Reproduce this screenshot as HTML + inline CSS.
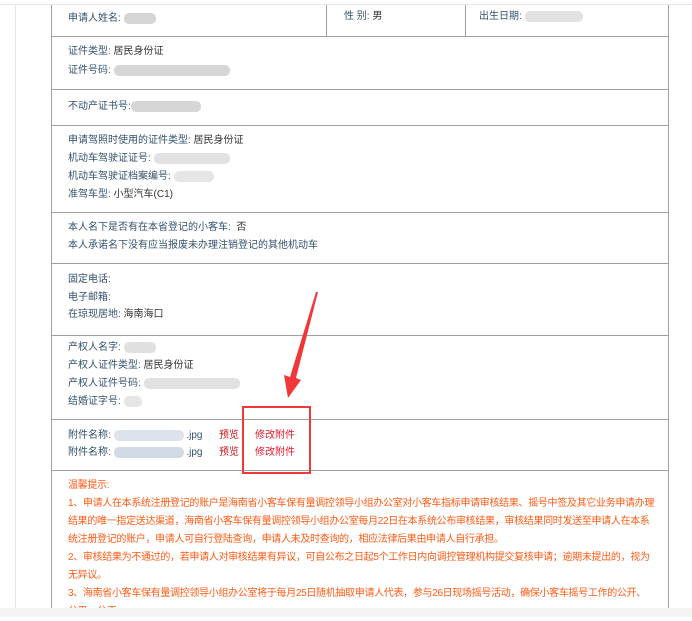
<!DOCTYPE html>
<html><head><meta charset="utf-8"><style>
body{margin:0;width:692px;height:617px;background:#fff;position:relative;overflow:hidden;font-family:"Liberation Sans","Noto Sans CJK SC",sans-serif;font-size:10px;color:#333}
.a{position:absolute;white-space:nowrap;line-height:18px}
.l{color:#34526e}
.h{position:absolute;left:51px;width:618px;height:1px;background:#a0a0a0}
.b{display:inline-block;height:11px;vertical-align:middle;background:#d6d6d6;border-radius:5px}
.t{position:absolute;left:68px;width:620px;color:#ff5a14;font-size:10px;line-height:18px;white-space:nowrap;letter-spacing:-0.32px}
</style></head><body>
<div style="position:absolute;left:0;top:4px;width:692px;height:1px;background:#e6e9ee"></div>
<div style="position:absolute;left:15px;top:5px;width:1px;height:603px;background:#dfe6ee"></div>
<div style="position:absolute;left:51px;top:5px;width:1px;height:603px;background:#a0a0a0"></div>
<div style="position:absolute;left:668px;top:5px;width:1px;height:603px;background:#a0a0a0"></div>
<div style="position:absolute;left:326px;top:5px;width:1px;height:31px;background:#a0a0a0"></div>
<div style="position:absolute;left:465px;top:5px;width:1px;height:31px;background:#a0a0a0"></div>
<div class="h" style="top:36px"></div><div class="h" style="top:89px"></div><div class="h" style="top:125px"></div><div class="h" style="top:212px"></div><div class="h" style="top:263px"></div><div class="h" style="top:335px"></div><div class="h" style="top:419px"></div><div class="h" style="top:470px"></div>

<div class="a" style="left:68px;top:10px"><span class="l">申请人姓名:</span> <span class="b" style="width:32px"></span></div>
<div class="a" style="left:344px;top:8px"><span class="l">性 别:</span> 男</div>
<div class="a" style="left:479px;top:8px"><span class="l">出生日期:</span> <span class="b" style="width:58px;background:#e2e2e2"></span></div>

<div class="a" style="left:68px;top:43px"><span class="l">证件类型:</span> 居民身份证</div>
<div class="a" style="left:68px;top:62px"><span class="l">证件号码:</span> <span class="b" style="width:116px"></span></div>
<div class="a" style="left:68px;top:98px"><span class="l">不动产证书号:</span><span class="b" style="width:70px"></span></div>

<div class="a" style="left:68px;top:132px"><span class="l">申请驾照时使用的证件类型:</span> 居民身份证</div>
<div class="a" style="left:68px;top:150px"><span class="l">机动车驾驶证证号:</span> <span class="b" style="width:76px;background:#e2e2e2"></span></div>
<div class="a" style="left:68px;top:168px"><span class="l">机动车驾驶证档案编号:</span> <span class="b" style="width:40px;background:#e6e6e6"></span></div>
<div class="a" style="left:68px;top:186px"><span class="l">准驾车型:</span> 小型汽车(C1)</div>

<div class="a" style="left:68px;top:219px"><span class="l">本人名下是否有在本省登记的小客车:</span>&nbsp; 否</div>
<div class="a" style="left:68px;top:237px"><span class="l">本人承诺名下没有应当报废未办理注销登记的其他机动车</span></div>

<div class="a" style="left:68px;top:271px"><span class="l">固定电话:</span></div>
<div class="a" style="left:68px;top:289px"><span class="l">电子邮箱:</span></div>
<div class="a" style="left:68px;top:306px"><span class="l">在琼现居地:</span> 海南海口</div>

<div class="a" style="left:68px;top:339px"><span class="l">产权人名字:</span> <span class="b" style="width:32px;background:#e0e0e0"></span></div>
<div class="a" style="left:68px;top:357px"><span class="l">产权人证件类型:</span> 居民身份证</div>
<div class="a" style="left:68px;top:375px"><span class="l">产权人证件号码:</span> <span class="b" style="width:96px;background:#e2e2e2"></span></div>
<div class="a" style="left:68px;top:393px"><span class="l">结婚证字号:</span> <span class="b" style="width:18px;background:#e6e6e6"></span></div>

<div class="a" style="left:68px;top:427px"><span class="l">附件名称:</span> <span class="b" style="width:70px;background:#dde3ea"></span> <span class="l">.jpg</span></div>
<div class="a" style="left:68px;top:444px"><span class="l">附件名称:</span> <span class="b" style="width:70px;background:#d2dbe5"></span> <span class="l">.jpg</span></div>
<div class="a" style="left:219px;top:427px;color:#d0101a">预览</div>
<div class="a" style="left:219px;top:444px;color:#d0101a">预览</div>
<div class="a" style="left:255px;top:427px;color:#e8182a">修改附件</div>
<div class="a" style="left:255px;top:444px;color:#e8182a">修改附件</div>
<div style="position:absolute;left:242px;top:406px;width:65px;height:64px;border:2.5px solid #f03838"></div>

<svg style="position:absolute;left:0;top:0" width="692" height="617"><polygon points="318,292 296,378 301,380 288,398 284,375 290,377 316,292" fill="#f03838"/></svg>

<div class="t" style="top:477px">温馨提示:<br>1、申请人在本系统注册登记的账户是海南省小客车保有量调控领导小组办公室对小客车指标申请审核结果、摇号中签及其它业务申请办理<br>结果的唯一指定送达渠道，海南省小客车保有量调控领导小组办公室每月22日在本系统公布审核结果，审核结果同时发送至申请人在本系<br>统注册登记的账户，申请人可自行登陆查询，申请人未及时查询的，相应法律后果由申请人自行承担。<br>2、审核结果为不通过的，若申请人对审核结果有异议，可自公布之日起5个工作日内向调控管理机构提交复核申请；逾期未提出的，视为<br>无异议。<br>3、海南省小客车保有量调控领导小组办公室将于每月25日随机抽取申请人代表，参与26日现场摇号活动，确保小客车摇号工作的公开、<br>公平、公正。</div>
<div style="position:absolute;left:0;top:608px;width:692px;height:9px;background:#f4f4f4"></div>
</body></html>
